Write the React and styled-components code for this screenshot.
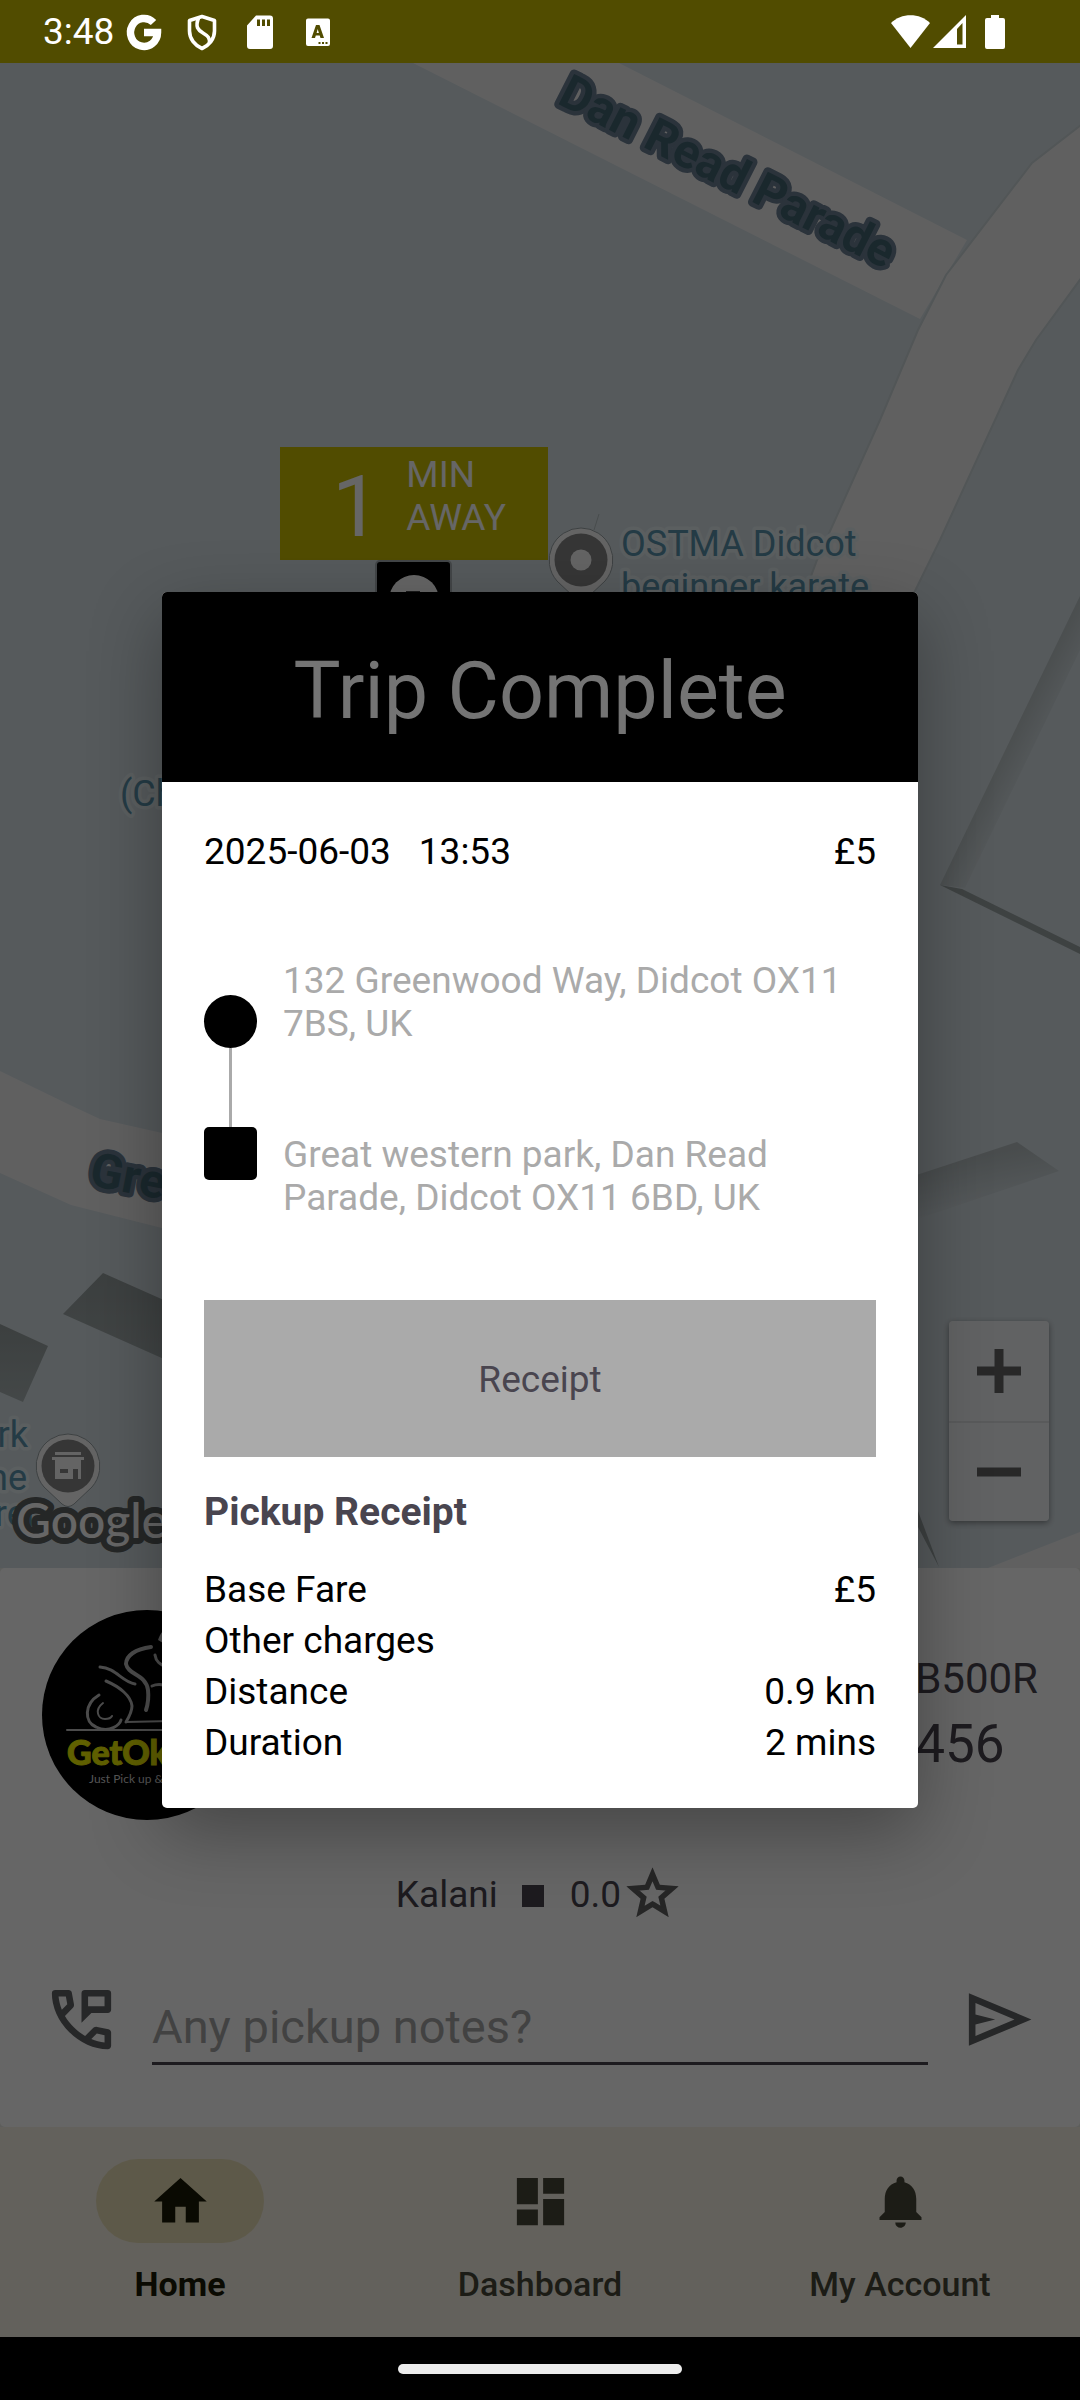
import React from "react";
import styled, { createGlobalStyle } from "styled-components";
import { MdDashboard, MdHome, MdNotifications } from "react-icons/md";

const GlobalStyle = createGlobalStyle`
  *, *::before, *::after { box-sizing: border-box; }
  body { margin: 0; background: #000; font-family: Roboto, "Noto Sans", sans-serif; }
  button, input { font: inherit; color: inherit; }
  h1, h2, p, dl, dd, dt { margin: 0; font-weight: 400; }
`;

const Screen = styled.div`
  display: flex;
  flex-direction: column;
  min-height: 100vh;
  font-size: 37px;
  line-height: 43px;
`;

/* ---------- system bars ---------- */

const StatusBar = styled.header`
  display: flex;
  align-items: center;
  justify-content: space-between;
  height: 63px;
  padding: 0 59px 0 43px;
  background: #514c00;
  color: #fff;
`;

const StatusGroup = styled.div`
  display: flex;
  align-items: center;
  gap: ${(p) => p.$gap}px;
`;

const Clock = styled.time`
  margin-right: -7px;
`;

const GestureBar = styled.footer`
  display: flex;
  align-items: center;
  justify-content: center;
  height: 63px;
  background: #000;
`;

const GesturePill = styled.span`
  width: 284px;
  height: 10px;
  border-radius: 5px;
  background: #ececec;
`;

/* ---------- app surface ---------- */

const Surface = styled.div`
  position: relative;
  display: flex;
  flex: 1;
  flex-direction: column;
  background: #e9eae6;
`;

const MapArea = styled.section`
  position: relative;
  flex: 1;
  min-height: 600px;
  overflow: hidden;
  background: #d7e1e6;
`;

const MapCanvas = styled.svg`
  position: absolute;
  inset: 0;
  width: 100%;
  height: 100%;
`;

const EtaBadge = styled.div`
  position: absolute;
  top: 384px;
  left: 280px;
  display: flex;
  gap: 26px;
  width: 268px;
  height: 113px;
  padding: 6px 0 0 52px;
  background: #cbbe00;
  color: #fff;
`;

const EtaValue = styled.span`
  font-size: 86px;
  line-height: 107px;
`;

const ZoomControl = styled.div`
  position: absolute;
  right: 31px;
  bottom: 47px;
  display: flex;
  flex-direction: column;
  width: 100px;
  border-radius: 4px;
  background: rgba(255, 255, 255, 0.7);
  box-shadow: 0 2px 6px rgba(0, 0, 0, 0.4);
`;

const ZoomButton = styled.button`
  display: grid;
  place-items: center;
  height: 100px;
  padding: 0;
  border: 0;
  background: none;

  & + & {
    border-top: 2px solid #dfe2e3;
  }
`;

const DriverCard = styled.section`
  padding: 42px 42px 62px;
  border-radius: 5px;
  background: #fff;
  color: #49454f;
`;

const DriverTop = styled.div`
  display: flex;
  align-items: center;
  justify-content: space-between;
`;

const Vehicle = styled.div`
  display: flex;
  flex-direction: column;
  gap: 6px;
`;

const Plate = styled.span`
  font-size: 42px;
  line-height: 52px;
`;

const TripCode = styled.span`
  font-size: 53px;
  line-height: 66px;
`;

const DriverRow = styled.div`
  display: flex;
  align-items: center;
  justify-content: center;
  height: 63px;
  margin-top: 42px;
`;

const RowText = styled.span`
  padding-top: 2px;
`;

const Bullet = styled.span`
  width: 22px;
  height: 22px;
  margin: 5px 26px 0 24px;
  background: #49454f;
`;

const NotesRow = styled.form`
  display: flex;
  align-items: center;
  gap: 31px;
  margin-top: 48px;
`;

const IconButton = styled.button`
  display: grid;
  place-items: center;
  width: 79px;
  height: 79px;
  padding: 0;
  border: 0;
  background: none;
  color: #606264;
`;

const NotesInput = styled.input`
  flex: 1;
  min-width: 0;
  height: 92px;
  padding: 26px 0 8px;
  border: 0;
  border-bottom: 3px solid #49454f;
  border-radius: 0;
  outline: 0;
  background: none;
  font-size: 47px;
  line-height: 55px;

  &::placeholder {
    color: #a5a5a5;
    opacity: 1;
  }
`;

const NavBar = styled.nav`
  display: grid;
  grid-template-columns: repeat(3, 1fr);
  padding: 32px 0 34px;
  background: #f7f2e5;
`;

const NavLink = styled.a`
  display: flex;
  flex-direction: column;
  align-items: center;
  gap: 22px;
  color: ${(p) => (p.$active ? "#1a1a05" : "#484638")};
  font-size: 34px;
  font-weight: ${(p) => (p.$active ? 700 : 500)};
  line-height: 38px;
  text-decoration: none;
`;

const NavPill = styled.span`
  display: grid;
  place-items: center;
  width: 168px;
  height: 84px;
  border-radius: 42px;
  background: ${(p) => (p.$active ? "#e9dfb7" : "transparent")};
`;

/* ---------- dialog ---------- */

const Scrim = styled.div`
  position: absolute;
  inset: 0;
  display: flex;
  align-items: center;
  justify-content: center;
  background: rgba(0, 0, 0, 0.6);
`;

const Dialog = styled.div`
  width: 70%;
  overflow: hidden;
  border-radius: 5px;
  background: #fff;
  color: #000;
  box-shadow: 0 24px 72px rgba(0, 0, 0, 0.32);
`;

const DialogTitle = styled.h1`
  padding: 53px 0 45px;
  background: #000;
  color: #747474;
  font-size: 79px;
  line-height: 92px;
  text-align: center;
`;

const DialogBody = styled.div`
  padding: 48px 42px 44px;
`;

const SplitRow = styled.div`
  display: flex;
  justify-content: space-between;
`;

const DateTime = styled.p`
  display: flex;
  gap: 28px;
`;

const Route = styled.div`
  display: flex;
  gap: 26px;
  margin-top: 86px;
`;

const RouteMarkers = styled.div`
  display: flex;
  flex-direction: column;
  align-items: center;
  padding-top: 36px;
`;

const Stop = styled.span`
  width: 53px;
  height: 53px;
  border-radius: ${(p) => (p.$round ? "50%" : "5px")};
  background: #000;
`;

const RouteLine = styled.span`
  width: 3px;
  height: 79px;
  background: #aaa;
`;

const Addresses = styled.div`
  display: flex;
  flex: 1;
  flex-direction: column;
  gap: 88px;
  color: #aaa;
`;

const ReceiptButton = styled.button`
  width: 100%;
  height: 157px;
  margin-top: 81px;
  padding: 2px 0 0;
  border: 0;
  background: #aaa;
  color: #49454f;
`;

const ReceiptTitle = styled.h2`
  margin: 32px 0 33px;
  color: #49454f;
  font-size: 39px;
  font-weight: 700;
  line-height: 46px;
`;

const ReceiptList = styled.dl`
  display: flex;
  flex-direction: column;
  gap: 8px;
`;

/* ---------- drawings ---------- */

const StatusGlyph = ({ width = 42, children }) => (
  <svg width={width} height="42" viewBox={`0 0 ${width} 42`} fill="#fff" aria-hidden="true">
    {children}
  </svg>
);

const GoogleG = () => (
  <StatusGlyph>
    <path
      d="M30.5 11.5 A13.5 14 0 1 0 34.5 21.5 H21"
      fill="none"
      stroke="#fff"
      strokeWidth="7.5"
    />
  </StatusGlyph>
);

const Shield = () => (
  <StatusGlyph>
    <g fill="none" stroke="#fff" strokeWidth="3.6" strokeLinejoin="round">
      <path d="M21 5.5 8.5 9.5 V20 C8.5 28 14 34.5 21 37.5 C28 34.5 33.5 28 33.5 20 V9.5 Z" />
      <path d="M17.5 7 C14 16 17 19 22 22 C27 25 29 27 28.5 32" />
    </g>
  </StatusGlyph>
);

const SdCard = () => (
  <StatusGlyph>
    <path
      fillRule="evenodd"
      d="M17 4.5 H31 A3 3 0 0 1 34 7.500 V35 A3 3 0 0 1 31 38 H11 A3 3 0 0 1 8 35 V14.500 Z M18 8.500 V15 H21 V8.500 Z M23 8.500 V15 H26 V8.500 Z M28 8.500 V15 H31 V8.500 Z"
    />
  </StatusGlyph>
);

const LetterCard = () => (
  <StatusGlyph>
    <path
      fillRule="evenodd"
      d="M11 7.500 H31 A2 2 0 0 1 33 9.500 V33 A2 2 0 0 1 31 35 H11 A2 2 0 0 1 9 33 V9.500 A2 2 0 0 1 11 7.500 Z M19 14 L14.500 27 H18 L18.800 24.500 H22.700 L23.500 27 H27 L22.500 14 Z M20.700 18 L21.900 22 H19.600 Z M21.500 31 V33 H23.500 V31 Z M25 31 V33 H27 V31 Z M28.500 31 V33 H30.500 V31 Z"
    />
  </StatusGlyph>
);

const Wifi = () => (
  <StatusGlyph width={39}>
    <path d="M19.500 37 L0 12 C10 1.500 29 1.500 39 12 Z" />
  </StatusGlyph>
);

const Signal = () => (
  <StatusGlyph width={33}>
    <path fillRule="evenodd" d="M33 4 V37 H0 Z M29.500 12 L24 18 V33.500 H29.500 Z" />
  </StatusGlyph>
);

const Battery = () => (
  <StatusGlyph width={52}>
    <path d="M22 4 H30 V7 H34 A2 2 0 0 1 36 9 V36 A2 2 0 0 1 34 38 H18 A2 2 0 0 1 16 36 V9 A2 2 0 0 1 18 7 H22 Z" />
  </StatusGlyph>
);

const SendIcon = () => (
  <svg width="79" height="79" viewBox="0 -960 960 960" fill="currentColor" aria-hidden="true">
    <path d="M120-160v-640l760 320-760 320Zm80-120 474-200-474-200v140l240 60-240 60v140Z" />
  </svg>
);

const PhoneMessageIcon = () => (
  <svg width="79" height="79" viewBox="0 -960 960 960" fill="currentColor" aria-hidden="true">
    <path d="M798-120q-125 0-247-54.500T329-329Q229-429 174.500-551T120-798q0-18 12-30t30-12h162q14 0 25 9.500t13 22.500l26 140q2 16-1 27t-11 19l-97 98q20 37 47.500 71.500T387-386q31 31 65 57.500t72 48.500l94-94q9-9 23.500-13.500T670-390l138 28q14 4 23 14.500t9 23.500v162q0 18-12 30t-30 12ZM241-600l66-66-17-94h-89q5 41 14 81t26 79Zm358 358q39 17 79.500 27t81.500 13v-88l-94-19-67 67Z" />
    <path d="M480-440v-360q0-17 11.500-28.500T520-840h280q17 0 28.500 11.500T840-800v200q0 17-11.500 28.500T800-560H600L480-440Zm80-200h200v-120H560v120Z" />
  </svg>
);

const starPath =
  "M12 17.270L18.180 21l-1.640-7.030L22 9.240l-7.190-.610L12 2 9.190 8.630 2 9.240l5.460 4.730L5.820 21z";

const StarIcon = () => (
  <svg width="63" height="63" viewBox="0 0 24 24" aria-hidden="true">
    <clipPath id="starClip">
      <path d={starPath} />
    </clipPath>
    <path d={starPath} fill="none" stroke="#606060" strokeWidth="4.200" clipPath="url(#starClip)" />
  </svg>
);

const PlusMinus = ({ plus }) => (
  <svg width="44" height="44" viewBox="0 0 44 44" fill="#646464" aria-hidden="true">
    <rect y="17.500" width="44" height="9" />
    {plus && <rect x="17.500" width="9" height="44" />}
  </svg>
);

const Pin = ({ x, y, children }) => (
  <g transform={`translate(${x} ${y})`}>
    <path
      d="M0 -32 A32 32 0 0 1 24 21 L6 38 Q0 43 -6 38 L-24 21 A32 32 0 0 1 0 -32 Z"
      fill="#fbfbfb"
      stroke="#9aa3a6"
      strokeWidth="1"
    />
    <circle r="26.500" fill="#878787" />
    {children}
  </g>
);

const StreetMap = () => (
  <MapCanvas viewBox="0 63 1080 1505" preserveAspectRatio="xMinYMin slice" role="img" aria-label="Map">
    <defs>
      <linearGradient id="shadeYard" gradientUnits="userSpaceOnUse" x1="960" y1="1160" x2="970" y2="1212">
        <stop offset="0" stopColor="#b6bfc1" />
        <stop offset="1" stopColor="#d7e1e6" />
      </linearGradient>
      <linearGradient id="shadeWall" gradientUnits="userSpaceOnUse" x1="1006" y1="748" x2="1036" y2="763">
        <stop offset="0" stopColor="#bcc5c7" />
        <stop offset="1" stopColor="#d7e1e6" />
      </linearGradient>
      <linearGradient id="shadeRoof" x1="0" y1="0" x2="0" y2="1">
        <stop offset="0" stopColor="#969f9f" />
        <stop offset="1" stopColor="#aab3b4" />
      </linearGradient>
    </defs>

    <g fill="#f0f0f1" stroke="#ccd6d9" strokeWidth="2">
      <path d="M413 63 L920 319 L967 240 L619 63 Z" stroke="none" />
      <path d="M1090 118 L1032 163 L946 275 L918 330 L880 420 L817 560 L780 660 H880 L915 591 L940 540 L1018 370 L1036 340 L1090 266 Z" />
      <path d="M-10 1066 L0 1071 L70 1105 L100 1119 L220 1146 V1240 L162 1228 L71 1205 L0 1173 L-10 1168 Z" stroke="none" />
      <path d="M988 1568 L1080 1532 V1568 Z" stroke="none" />
    </g>

    <g fill="url(#shadeRoof)">
      <path d="M103 1273 L220 1325 V1384 L63 1314 Z" />
      <path d="M0 1324 L48 1346 L23 1402 L0 1392 Z" />
    </g>
    <path d="M940 885 L1080 596 V650 L965 888 Z" fill="url(#shadeWall)" />
    <path d="M940 885 L962 889 L1080 947 V954 Z" fill="#9ba5a5" />
    <path d="M880 1187 L1017 1142 L1059 1171 L880 1232 Z" fill="url(#shadeYard)" />
    <path d="M905 1490 L918 1511 L939 1567 L918 1527 L905 1510 Z" fill="#9ba5a5" />
    <path d="M594 530 L599 514" stroke="#b4bfc1" strokeWidth="1" />

    <g
      fill="#416470"
      stroke="#6b7f93"
      strokeWidth="9"
      strokeLinejoin="round"
      paintOrder="stroke"
      fontSize="48"
      fontWeight="700"
    >
      <text transform="translate(556 103) rotate(26.800)">Dan Read Parade</text>
      <text transform="translate(88 1185) rotate(11)">Greenwood Way</text>
    </g>

    <g
      fill="#5a93ad"
      stroke="#e4eef1"
      strokeWidth="7"
      strokeLinejoin="round"
      paintOrder="stroke"
      fontSize="36"
    >
      <text x="621" y="556">OSTMA Didcot</text>
      <text x="621" y="599">beginner karate</text>
      <text x="120" y="806">(Ch</text>
      <text x="28" y="1447" textAnchor="end">rk</text>
      <text x="27" y="1490" textAnchor="end">ne</text>
      <text x="38" y="1526" textAnchor="end">orer</text>
    </g>

    <Pin x={581} y={560}>
      <circle r="10.500" fill="#fbfbfb" />
    </Pin>
    <Pin x={68} y={1466}>
      <path
        fill="#fbfbfb"
        fillRule="evenodd"
        d="M-13 -14 H13 V-11 H-13 Z M-16 -9 H16 V-6 H13 V13 H10 V3 H5 V13 H-13 V-6 H-16 Z M-8 3 V7 H0 V3 Z"
      />
    </Pin>

    <g>
      <rect x="376" y="561" width="75" height="75" rx="4" fill="#000" stroke="#a8b0b3" strokeWidth="2" />
      <circle cx="414" cy="600" r="25" fill="#fff" />
      <rect x="406" y="591" width="14" height="16" fill="#444" />
    </g>

    <text
      x="16"
      y="1538"
      fill="#fff"
      stroke="#5d6161"
      strokeWidth="12"
      strokeLinejoin="round"
      paintOrder="stroke"
      fontFamily="Lato, sans-serif"
      fontSize="48"
      fontWeight="500"
    >
      Google
    </text>
  </MapCanvas>
);

const DriverLogo = () => (
  <svg width="210" height="210" viewBox="0 0 210 210" role="img" aria-label="Driver">
    <circle cx="105" cy="105" r="105" fill="#000" />
    <g fill="none" stroke="#bdbdbd" strokeWidth="3" strokeLinecap="round">
      <path d="M57 85 C42 94 42 112 54 117 C68 124 78 114 79 110" />
      <path d="M64 71 C78 77 89 86 90 96 C90 102 87 107 84 112" />
      <path d="M61 93 C52 100 56 109 63 109 C66 109 69 108 70 106" strokeWidth="2" />
      <path d="M58 57 C74 58 80 72 93 74" />
      <path d="M109 37 C93 39 84 46 84 54 C86 65 104 64 106 80 C107 89 106 94 104 100" strokeWidth="4" />
      <path d="M110 76 C114 74 120 74 126 76" />
      <path d="M25 120 H180 M84 112 L130 111" strokeWidth="2" />
      <path d="M113 45 C114 52 118 54 124 57" />
    </g>
    <path d="M116 30 C118 24 121 19 128 16 L126 36 Z" fill="#bdbdbd" />
    <text
      x="25"
      y="155"
      fill="#efef00"
      stroke="#efef00"
      strokeWidth="1"
      fontFamily="Lato, sans-serif"
      fontSize="34"
      fontWeight="900"
    >
      GetOk
    </text>
    <text x="47" y="173" fill="#d4d4d4" fontFamily="Lato, sans-serif" fontSize="12">
      Just Pick up &amp;
    </text>
  </svg>
);

/* ---------- data ---------- */

const receipt = [
  ["Base Fare", "£5"],
  ["Other charges", ""],
  ["Distance", "0.9 km"],
  ["Duration", "2 mins"],
];

const tabs = [
  { label: "Home", Icon: MdHome, active: true },
  { label: "Dashboard", Icon: MdDashboard },
  { label: "My Account", Icon: MdNotifications },
];

export default function App() {
  return (
    <Screen>
      <GlobalStyle />
      <StatusBar>
        <StatusGroup $gap={16}>
          <Clock>3:48</Clock>
          <GoogleG />
          <Shield />
          <SdCard />
          <LetterCard />
        </StatusGroup>
        <StatusGroup $gap={3}>
          <Wifi />
          <Signal />
          <Battery />
        </StatusGroup>
      </StatusBar>

      <Surface>
        <MapArea>
          <StreetMap />
          <EtaBadge>
            <EtaValue>1</EtaValue>
            <span>
              MIN
              <br />
              AWAY
            </span>
          </EtaBadge>
          <ZoomControl>
            <ZoomButton type="button" aria-label="Zoom in">
              <PlusMinus plus />
            </ZoomButton>
            <ZoomButton type="button" aria-label="Zoom out">
              <PlusMinus />
            </ZoomButton>
          </ZoomControl>
        </MapArea>

        <DriverCard>
          <DriverTop>
            <DriverLogo />
            <Vehicle>
              <Plate>B500R</Plate>
              <TripCode>456</TripCode>
            </Vehicle>
          </DriverTop>
          <DriverRow>
            <RowText>Kalani</RowText>
            <Bullet />
            <RowText>0.0</RowText>
            <StarIcon />
          </DriverRow>
          <NotesRow onSubmit={(e) => e.preventDefault()}>
            <IconButton type="button" aria-label="Contact driver">
              <PhoneMessageIcon />
            </IconButton>
            <NotesInput type="text" aria-label="Pickup notes" placeholder="Any pickup notes?" />
            <IconButton type="submit" aria-label="Send">
              <SendIcon />
            </IconButton>
          </NotesRow>
        </DriverCard>

        <NavBar>
          {tabs.map(({ label, Icon, active }) => (
            <NavLink key={label} href="#" $active={active}>
              <NavPill $active={active}>
                <Icon size={63} />
              </NavPill>
              {label}
            </NavLink>
          ))}
        </NavBar>

        <Scrim>
          <Dialog role="dialog" aria-modal="true" aria-labelledby="trip-title">
            <DialogTitle id="trip-title">Trip Complete</DialogTitle>
            <DialogBody>
              <SplitRow>
                <DateTime>
                  <span>2025-06-03</span>
                  <span>13:53</span>
                </DateTime>
                <span>£5</span>
              </SplitRow>
              <Route>
                <RouteMarkers>
                  <Stop $round />
                  <RouteLine />
                  <Stop />
                </RouteMarkers>
                <Addresses>
                  <p>132 Greenwood Way, Didcot OX11 7BS, UK</p>
                  <p>Great western park, Dan Read Parade, Didcot OX11 6BD, UK</p>
                </Addresses>
              </Route>
              <ReceiptButton type="button">Receipt</ReceiptButton>
              <ReceiptTitle>Pickup Receipt</ReceiptTitle>
              <ReceiptList>
                {receipt.map(([name, value]) => (
                  <SplitRow key={name}>
                    <dt>{name}</dt>
                    <dd>{value}</dd>
                  </SplitRow>
                ))}
              </ReceiptList>
            </DialogBody>
          </Dialog>
        </Scrim>
      </Surface>

      <GestureBar>
        <GesturePill />
      </GestureBar>
    </Screen>
  );
}
